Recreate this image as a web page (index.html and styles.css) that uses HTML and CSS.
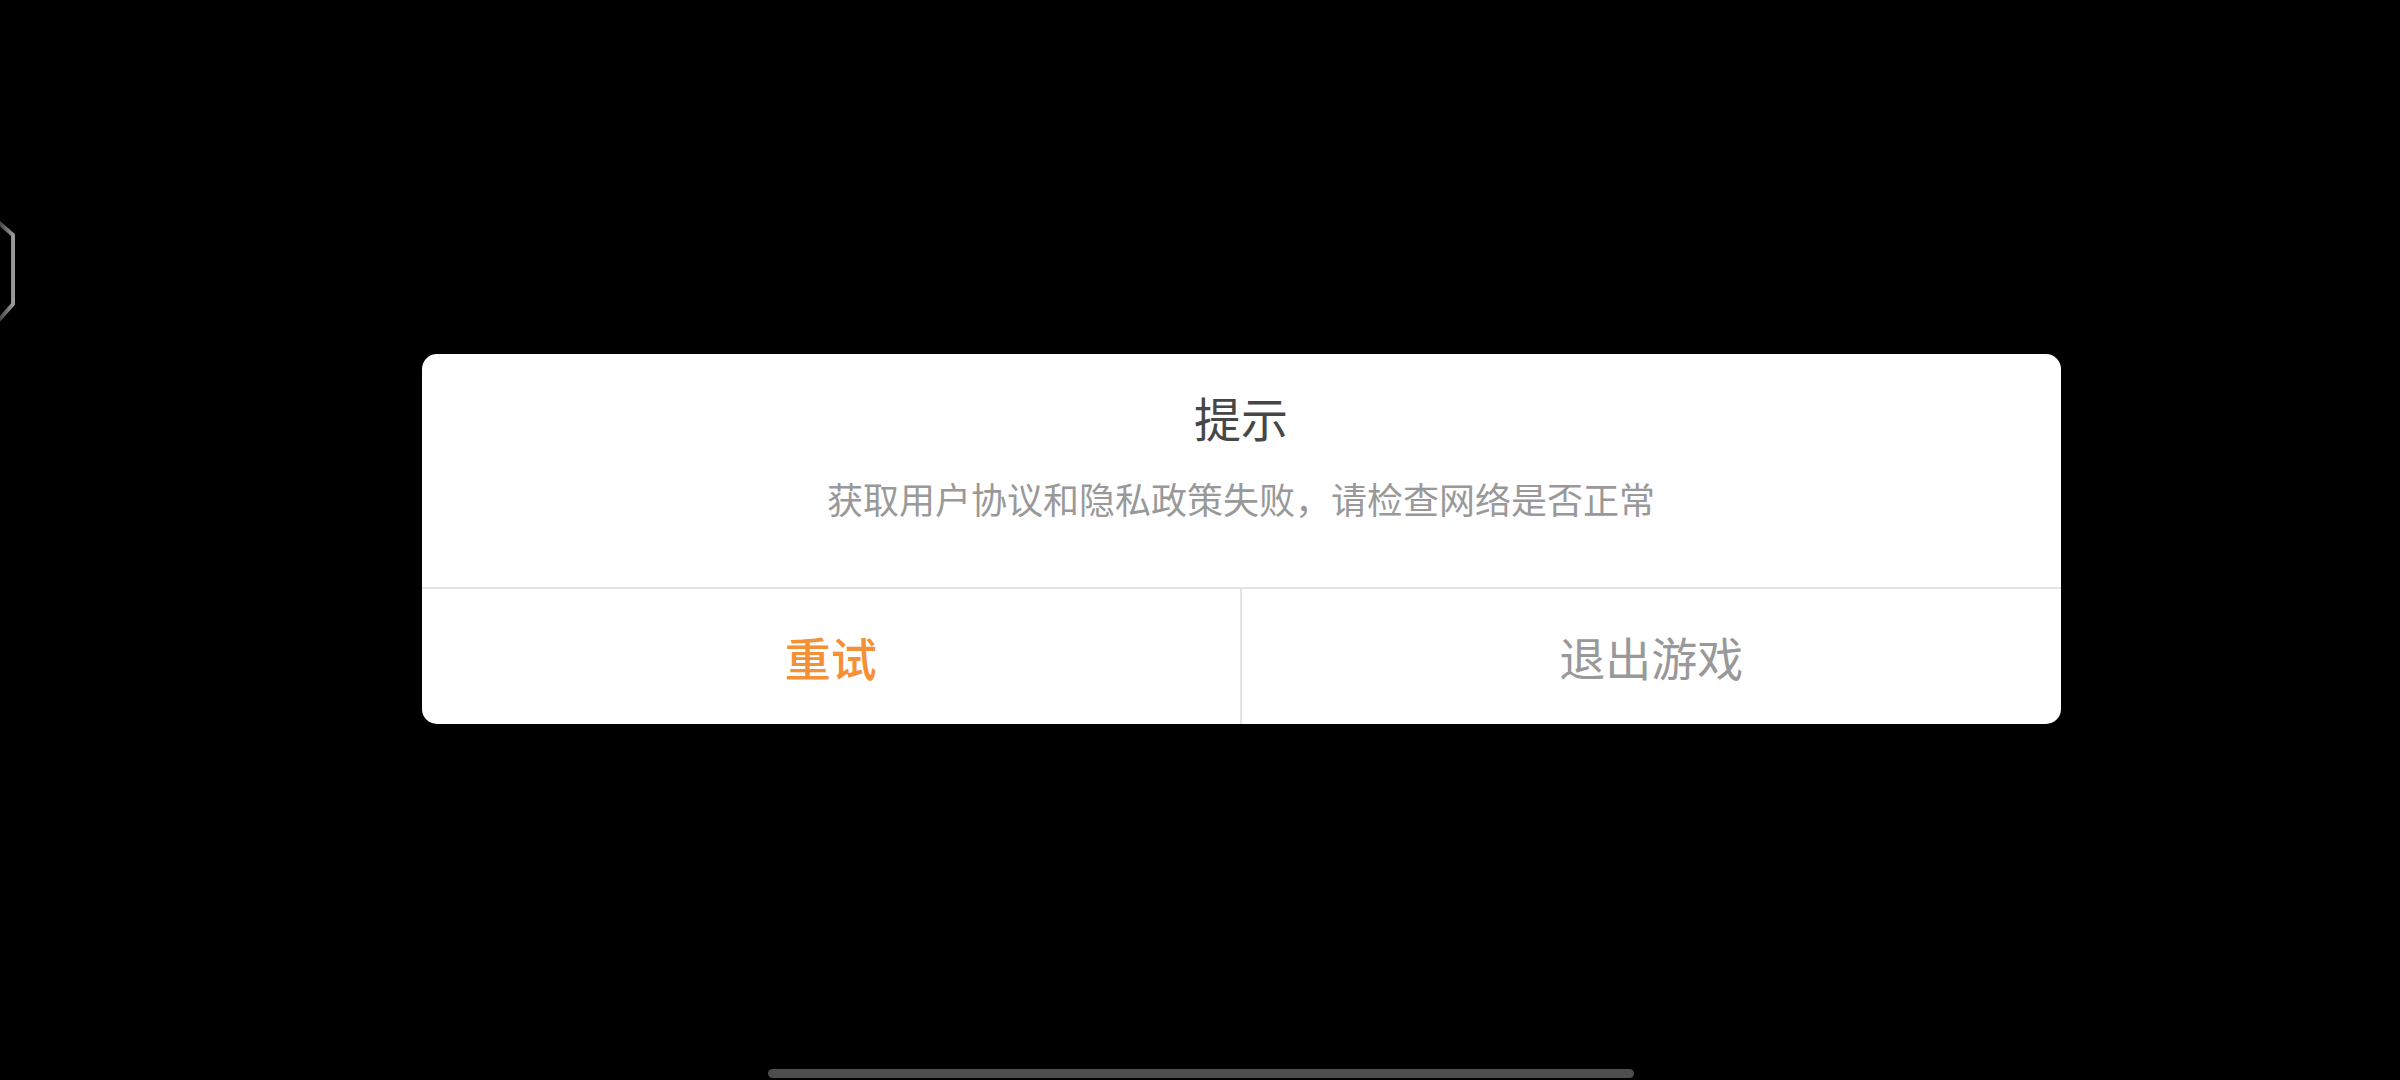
FILE: index.html
```html
<!DOCTYPE html>
<html lang="zh-CN">
<head>
<meta charset="utf-8">
<title>提示</title>
<link rel="stylesheet" href="styles.css">
</head>
<body>
<div class="screen">
  <svg class="edge-hex" width="20" height="110" viewBox="0 0 20 110">
    <defs>
      <linearGradient id="hg" x1="0" y1="0" x2="1" y2="0">
        <stop offset="0" stop-color="#3a3a3a"/>
        <stop offset="1" stop-color="#9a9a9a"/>
      </linearGradient>
    </defs>
    <polyline points="-2,6 13,19 13,88 -2,105" fill="none" stroke="url(#hg)" stroke-width="4" stroke-linejoin="round"/>
  </svg>
  <div class="dialog">
    <div class="dialog-body">
      <div class="dialog-title">提示</div>
      <div class="dialog-msg">获取用户协议和隐私政策失败，请检查网络是否正常</div>
    </div>
    <div class="dialog-actions">
      <div class="btn btn-retry">重试</div>
      <div class="btn btn-exit">退出游戏</div>
    </div>
  </div>
  <div class="home-indicator"></div>
</div>
</body>
</html>
```

FILE: styles.css
```css
* { box-sizing: border-box; }
html, body {
  margin: 0;
  padding: 0;
  background: #000;
  width: 2400px;
  height: 1080px;
  overflow: hidden;
  font-family: "Noto Sans CJK SC", "Noto Sans", sans-serif;
}
.screen {
  position: relative;
  width: 2400px;
  height: 1080px;
  display: flex;
  align-items: center;
  justify-content: center;
  padding-left: 82px;
}
.edge-hex {
  position: absolute;
  left: 0;
  top: 216px;
}
.dialog {
  width: 1639px;
  height: 370px;
  background: #fff;
  border-radius: 15px;
  display: flex;
  flex-direction: column;
  overflow: hidden;
  margin-top: -2px;
}
.dialog-body {
  height: 235px;
  display: flex;
  flex-direction: column;
  align-items: center;
  border-bottom: 2px solid #e3e3e3;
}
.dialog-title {
  margin-top: 33px;
  font-size: 47px;
  line-height: 60px;
  color: #474747;
}
.dialog-msg {
  margin-top: 27px;
  font-size: 36px;
  line-height: 48px;
  color: #999;
}
.dialog-actions {
  flex: 1;
  display: flex;
}
.btn {
  flex: 1;
  display: flex;
  align-items: center;
  justify-content: center;
  font-size: 46px;
  padding-bottom: 2px;
}
.btn-retry {
  color: #f49036;
  font-weight: 500;
  border-right: 2px solid #e3e3e3;
}
.btn-exit {
  color: #999;
}
.home-indicator {
  position: absolute;
  left: 768px;
  top: 1069px;
  width: 866px;
  height: 9px;
  border-radius: 5px;
  background: #4d4d4d;
}
```
